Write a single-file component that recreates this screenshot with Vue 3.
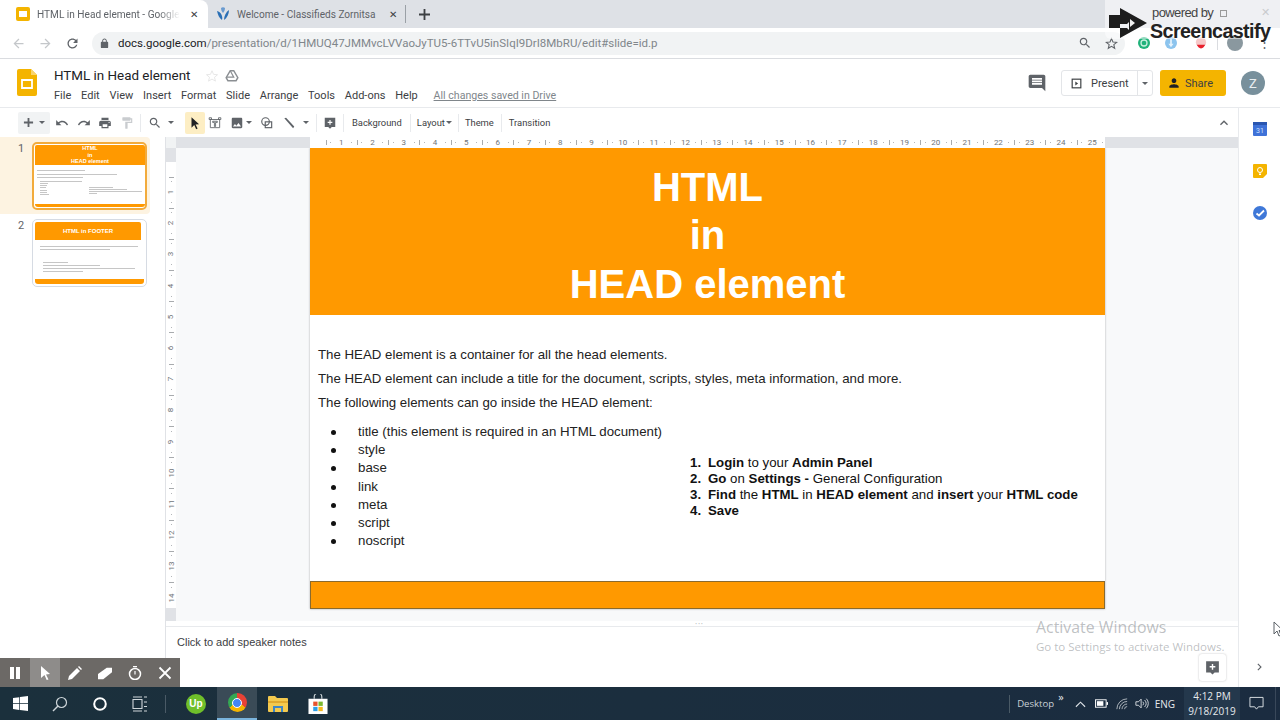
<template>
  <div class="app">
    <!-- browser tabs -->
    <div class="tabs">
      <div class="tab active">
        <svg class="fav" viewBox="0 0 14 14"><rect width="14" height="14" rx="2" fill="#f4b400"/><rect x="3" y="4" width="8" height="6" fill="#fff"/></svg>
        <span class="tab-title fade">HTML in Head element - Google</span>
        <span class="tab-x">✕</span>
      </div>
      <div class="tab second">
        <svg class="fav" viewBox="0 0 14 14"><path d="M1 4c1 4 2 7 5 9 1-4-1-8-5-9z" fill="#2a6fb5"/><path d="M8 13c3-2 5-6 5-10-3 2-5 6-5 10z" fill="#2a6fb5"/><path d="M5 1c0 2 1 4 2 5 1-1 2-3 2-5-1-1-3-1-4 0z" fill="#6a9bd0"/></svg>
        <span class="tab-title">Welcome - Classifieds Zornitsa</span>
        <span class="tab-x">✕</span>
      </div>
      <span class="tab-sep"></span>
      <svg class="tab-plus" viewBox="0 0 12 12"><path d="M5 0h2v5h5v2H7v5H5V7H0V5h5z" fill="#3c4043"/></svg>
    </div>

    <!-- address bar -->
    <div class="addr">
      <svg class="nav first" viewBox="0 0 24 24"><path :d="ic.back" fill="#c4c7ca"/></svg>
      <svg class="nav" viewBox="0 0 24 24"><path :d="ic.fwd" fill="#c4c7ca"/></svg>
      <svg class="nav" viewBox="0 0 24 24"><path :d="ic.reload" fill="#5f6368"/></svg>
      <div class="omni">
        <svg class="lock" viewBox="0 0 24 24"><path :d="ic.lock" fill="#5f6368"/></svg>
        <span class="url"><b>docs.google.com</b>/presentation/d/1HMUQ47JMMvcLVVaoJyTU5-6TTvU5inSIqI9DrI8MbRU/edit#slide=id.p</span>
        <svg class="omni-zoom" viewBox="0 0 24 24"><path :d="ic.search" fill="#5f6368"/></svg>
        <svg class="omni-star" viewBox="0 0 24 24"><path d="M12 3l2.7 6.2 6.8.6-5.2 4.4 1.6 6.6L12 17.3l-5.9 3.5 1.6-6.6-5.2-4.4 6.8-.6z" fill="none" stroke="#5f6368" stroke-width="2"/></svg>
      </div>
      <div class="exts">
        <svg class="ext" viewBox="0 0 14 14"><circle cx="7" cy="7" r="7" fill="#20b27a"/><circle cx="7" cy="7" r="3.5" fill="none" stroke="#c8f0df" stroke-width="1.5"/></svg>
        <svg class="ext" viewBox="0 0 14 14"><circle cx="7" cy="7" r="7" fill="#8cc4ee"/><path d="M6 2h2v6h2l-3 4-3-4h2z" fill="#e6f3fc"/></svg>
        <svg class="ext three" viewBox="0 0 14 14"><circle cx="7" cy="6" r="6" fill="#f6c9c9"/><path d="M2 9h10l-2 3a4 4 0 0 1-6 0z" fill="#e8202c"/></svg>
        <span class="ext-sep"></span>
        <span class="ext-avatar"></span>
        <span class="ext-dots">⋮</span>
      </div>
    </div>

    <!-- docs header -->
    <div class="dochead">
      <svg class="logo" viewBox="0 0 20 27"><path d="M2 0h12l6 6v19a2 2 0 0 1-2 2H2a2 2 0 0 1-2-2V2a2 2 0 0 1 2-2z" fill="#f4b400"/><path d="M14 0l6 6h-6z" fill="#f9d46c"/><path d="M5 11h10v8H5z" fill="none" stroke="#fff" stroke-width="1.8"/></svg>
      <div class="docinfo">
        <div class="doctitle">
          <span class="docname">HTML in Head element</span>
          <svg class="star" viewBox="0 0 24 24"><path d="M12 3l2.7 6.2 6.8.6-5.2 4.4 1.6 6.6L12 17.3l-5.9 3.5 1.6-6.6-5.2-4.4 6.8-.6z" fill="none" stroke="#e3e3e3" stroke-width="1.5"/></svg>
          <svg class="drive" viewBox="0 0 24 24"><path d="M9 3h6l7 12-3 5H5l-3-5z" fill="none" stroke="#8b8f93" stroke-width="2.5"/><path d="M9 3l6 11H3" fill="none" stroke="#8b8f93" stroke-width="2"/></svg>
        </div>
        <div class="menus">
          <span v-for="m in menus" :key="m">{{ m }}</span>
          <a class="saved">All changes saved in Drive</a>
        </div>
      </div>
      <svg class="comments" viewBox="0 0 24 24"><path :d="ic.comment" fill="#5f6368"/></svg>
      <div class="present">
        <svg class="present-ic" viewBox="0 0 14 14"><rect x="1.5" y="1.5" width="11" height="11" fill="none" stroke="#3c4043" stroke-width="1.5"/><path d="M5.500 4.500l3.500 2.500-3.500 2.500z" fill="#3c4043"/></svg>
        <span class="present-txt">Present</span>
        <span class="present-caret"><i class="caret"></i></span>
      </div>
      <div class="share">
        <svg viewBox="0 0 24 24"><path :d="ic.person" fill="#202124"/></svg>
        <span>Share</span>
      </div>
      <div class="avatar">Z</div>
    </div>

    <div class="work">
      <div class="center">
        <!-- slides toolbar -->
        <div class="toolbar">
          <div class="tb-new">
            <svg class="tb-plus" viewBox="0 0 12 12"><path d="M5 1h2v4h4v2H7v4H5V7H1V5h4z" fill="#5f6368"/></svg>
            <i class="caret"></i>
          </div>
          <svg class="tb-ic" viewBox="0 0 24 24" style="margin-left:5px"><path :d="ic.undo" fill="#5f6368"/></svg>
          <svg class="tb-ic" viewBox="0 0 24 24" style="margin-left:8px"><path :d="ic.redo" fill="#5f6368"/></svg>
          <svg class="tb-ic" viewBox="0 0 24 24" style="margin-left:7px"><path :d="ic.print" fill="#5f6368"/></svg>
          <svg class="tb-ic" viewBox="0 0 24 24" style="margin-left:8px"><path :d="ic.paint" fill="#c9cccf"/></svg>
          <span class="tb-sep" style="margin-left:6px"></span>
          <svg class="tb-ic" viewBox="0 0 24 24" style="margin-left:7px"><path :d="ic.search" fill="#5f6368"/></svg>
          <i class="caret" style="margin-left:6px"></i>
          <div class="tb-select"><svg viewBox="0 0 24 24"><path :d="ic.cursor" fill="#202124"/></svg></div>
          <svg class="tb-ic" viewBox="0 0 24 24" style="margin-left:3px"><path d="M4 6h16v14H4zM2 3h4v3H2zM18 3h4v3h-4zM8 9h8v2h-3v7h-2v-7H8z" fill="none" stroke="#5f6368" stroke-width="1.5"/></svg>
          <svg class="tb-ic" viewBox="0 0 24 24" style="margin-left:8px"><path :d="ic.image" fill="#5f6368"/></svg>
          <i class="caret" style="margin-left:2px"></i>
          <svg class="tb-ic" viewBox="0 0 24 24" style="margin-left:8px"><rect x="3" y="3" width="13" height="13" rx="6.5" fill="none" stroke="#5f6368" stroke-width="2"/><rect x="9" y="10" width="11" height="10" fill="none" stroke="#5f6368" stroke-width="2"/></svg>
          <svg class="tb-ic" viewBox="0 0 24 24" style="margin-left:8px"><path d="M4 4l3-1 14 15-2 3z" fill="#5f6368"/></svg>
          <i class="caret" style="margin-left:7px"></i>
          <span class="tb-sep" style="margin-left:7px"></span>
          <svg class="tb-ic" viewBox="0 0 24 24" style="margin-left:6px"><path d="M3 3h18v16h-6l-3 3-3-3H3zM11 7v3H8v2h3v3h2v-3h3v-2h-3V7z" fill="#5f6368" fill-rule="evenodd"/></svg>
          <span class="tb-sep" style="margin-left:6px"></span>
          <span class="tb-txt" style="margin-left:8px">Background</span>
          <span class="tb-sep" style="margin-left:8px"></span>
          <span class="tb-txt" style="margin-left:6px">Layout</span>
          <i class="caret" style="margin-left:1px"></i>
          <span class="tb-sep" style="margin-left:6px"></span>
          <span class="tb-txt" style="margin-left:6px">Theme</span>
          <span class="tb-sep" style="margin-left:7px"></span>
          <span class="tb-txt" style="margin-left:7px">Transition</span>
          <svg class="tb-up" viewBox="0 0 24 24"><path d="M7.4 15.4L12 10.8l4.6 4.6L18 14l-6-6-6 6z" fill="#5f6368"/></svg>
        </div>

        <div class="panes">
          <!-- filmstrip -->
          <div class="film">
            <div class="film-row current">
              <span class="film-num">1</span>
              <div class="thumb on">
                <div class="thumb-head one">HTML<br>in<br>HEAD element</div>
                <div class="thumb-body">
                  <i v-for="(w, i) in thumbTop" :key="i" :style="{ width: w + 'px' }"></i>
                  <div class="thumb-cols">
                    <div class="thumb-list">
                      <i v-for="(w, i) in thumbList" :key="i" :style="{ width: w + 'px' }"></i>
                    </div>
                    <div class="thumb-steps">
                      <i v-for="(w, i) in thumbSteps" :key="i" :style="{ width: w + 'px' }"></i>
                    </div>
                  </div>
                </div>
                <div class="thumb-foot"></div>
              </div>
            </div>
            <div class="film-row">
              <span class="film-num">2</span>
              <div class="thumb">
                <div class="thumb-head two">HTML in FOOTER</div>
                <div class="thumb-body two">
                  <i v-for="(w, i) in thumbFoot" :key="i" :style="{ width: w + 'px' }"></i>
                  <div class="thumb-gap"></div>
                  <i v-for="(w, i) in thumbFootList" :key="'s' + i" class="inset" :style="{ width: w + 'px' }"></i>
                </div>
                <div class="thumb-foot two"></div>
              </div>
            </div>
          </div>

          <div class="stage">
            <div class="hruler">
              <span class="corner"></span>
              <span class="hgrey"></span>
              <div class="hmarks">
                <div v-for="n in 25" :key="n" class="hcell"><i></i><span>{{ n }}</span><i></i></div>
              </div>
              <span class="hgrey rest"></span>
            </div>
            <div class="canvas-row">
              <div class="vruler">
                <span class="vgrey"></span>
                <div v-for="n in 14" :key="n" class="vcell"><i></i><span>{{ n }}</span><i></i></div>
                <span class="vgrey end"></span>
              </div>
              <div class="canvas">
                <div class="slide">
                  <div class="slide-head">HTML<br>in<br>HEAD element</div>
                  <div class="slide-body">
                    <p>The HEAD element is a container for all the head elements.</p>
                    <p>The HEAD element can include a title for the document, scripts, styles, meta information, and more.</p>
                    <p>The following elements can go inside the HEAD element:</p>
                    <div class="cols">
                      <ul>
                        <li v-for="e in elements" :key="e">{{ e }}</li>
                      </ul>
                      <ol>
                        <li><b>Login</b> to your <b>Admin Panel</b></li>
                        <li><b>Go</b> on <b>Settings -</b> General Configuration</li>
                        <li><b>Find</b> the <b>HTML</b> in <b>HEAD element</b> and <b>insert</b> your <b>HTML code</b></li>
                        <li><b>Save</b></li>
                      </ol>
                    </div>
                  </div>
                  <div class="slide-foot"></div>
                </div>
              </div>
            </div>
            <div class="split"><span>• • •</span></div>
            <div class="notes">
              <span>Click to add speaker notes</span>
              <div class="notes-add">
                <svg viewBox="0 0 24 24"><path d="M3 3h18v16h-6l-3 3-3-3H3zM11 7v3H8v2h3v3h2v-3h3v-2h-3V7z" fill="#5f6368" fill-rule="evenodd"/></svg>
              </div>
            </div>
          </div>
        </div>
      </div>

      <!-- right side panel -->
      <div class="side">
        <svg class="side-ic first" viewBox="0 0 14 14"><rect width="14" height="14" rx="1" fill="#3f72d8"/><rect width="14" height="3" fill="#2a56b0"/><text x="7" y="11" text-anchor="middle" font-size="7" font-family="Roboto, sans-serif" fill="#cfe0ff">31</text></svg>
        <svg class="side-ic" viewBox="0 0 14 14"><path d="M1 0h12a1 1 0 0 1 1 1v9l-4 4H1a1 1 0 0 1-1-1V1a1 1 0 0 1 1-1z" fill="#f4b400"/><circle cx="7" cy="6" r="2.5" fill="none" stroke="#fff" stroke-width="1"/><path d="M6 9.5h2V11H6z" fill="#fff"/></svg>
        <svg class="side-ic" viewBox="0 0 14 14"><circle cx="7" cy="7" r="7" fill="#3f78d8"/><path d="M3.5 7.5l2.5 2 5-5" fill="none" stroke="#fff" stroke-width="1.8"/></svg>
        <svg class="side-next" viewBox="0 0 24 24"><path d="M9 6l6 6-6 6-1.4-1.400 4.600-4.600-4.600-4.600z" fill="#5f6368"/></svg>
      </div>
    </div>

    <!-- windows taskbar -->
    <div class="taskbar">
      <div class="tk-cell">
        <svg width="15" height="15" viewBox="0 0 15 15"><path d="M0 2.1l6.3-.9v6H0zM7 1.1L15 0v7.2H7zM0 8h6.3v6L0 13.100zM7 8h8v7l-8-1.100z" fill="#fff"/></svg>
      </div>
      <div class="tk-cell">
        <svg width="16" height="16" viewBox="0 0 16 16"><circle cx="9.5" cy="6.5" r="5" fill="none" stroke="#cfd6da" stroke-width="1.2"/><path d="M6 10l-5 5" stroke="#cfd6da" stroke-width="1.4"/></svg>
      </div>
      <div class="tk-cell">
        <svg width="16" height="16" viewBox="0 0 16 16"><circle cx="8" cy="8" r="5.8" fill="none" stroke="#fff" stroke-width="2"/></svg>
      </div>
      <div class="tk-cell">
        <svg width="16" height="16" viewBox="0 0 16 16"><path d="M1 3.500h9v9H1zM1 1h9M1 15h9M12 1h3M12 6h3M12 10.500h3M12 15h3" fill="none" stroke="#cfd6da" stroke-width="1.1"/></svg>
      </div>
      <span class="tk-sep"></span>
      <div class="tk-cell">
        <span class="upwork">Up</span>
      </div>
      <div class="tk-cell chrome-on">
        <span class="chrome"><i></i></span>
      </div>
      <div class="tk-cell">
        <svg width="20" height="17" viewBox="0 0 20 17"><path d="M0 2a1 1 0 0 1 1-1h6l2 2h10a1 1 0 0 1 1 1v12a1 1 0 0 1-1 1H1a1 1 0 0 1-1-1z" fill="#f3c94e"/><path d="M0 6h20v2H0z" fill="#e0a92e"/><path d="M5 11h10v6h-2v-4H7v4H5z" fill="#3d86c6"/></svg>
      </div>
      <div class="tk-cell">
        <svg width="20" height="20" viewBox="0 0 20 21"><path d="M6 5V3a4 4 0 0 1 8 0v2" fill="none" stroke="#cfd6da" stroke-width="1.2"/><rect y="5" width="20" height="16" fill="#fff"/><rect x="5" y="8" width="4.5" height="4.5" fill="#e8532d"/><rect x="10.5" y="8" width="4.5" height="4.5" fill="#7cb82f"/><rect x="5" y="13.5" width="4.5" height="4.5" fill="#2c9ee8"/><rect x="10.5" y="13.5" width="4.5" height="4.5" fill="#f6b81c"/></svg>
      </div>
      <div class="tray">
        <span class="tray-sep"></span>
        <span class="tray-desk">Desktop</span>
        <span class="tray-more">»</span>
        <svg class="tray-up" viewBox="0 0 12 8"><path d="M1 7l5-5 5 5" fill="none" stroke="#dfe4e8" stroke-width="1.2"/></svg>
        <svg class="tray-bat" viewBox="0 0 14 9"><rect x=".5" y=".5" width="11.5" height="8" fill="none" stroke="#fff"/><rect x="2" y="2" width="7" height="5" fill="#fff"/><rect x="12.5" y="3" width="1.5" height="3" fill="#fff"/></svg>
        <svg class="tray-wifi" viewBox="0 0 14 14"><path d="M1 13a12 12 0 0 1 12-12M4 13a9 9 0 0 1 9-9M7 13a6 6 0 0 1 6-6M10 13a3 3 0 0 1 3-3" fill="none" stroke="#bfc6cc" stroke-width="1"/></svg>
        <svg class="tray-snd" viewBox="0 0 16 14"><path d="M1 5h3l3-3v10L4 9H1zM9 5a3 3 0 0 1 0 4M11 3a6 6 0 0 1 0 8M13 1.5a8 8 0 0 1 0 11" fill="none" stroke="#dfe4e8" stroke-width="1"/></svg>
        <span class="tray-lang">ENG</span>
        <div class="clock"><span>4:12 PM</span><span>9/18/2019</span></div>
        <svg class="tray-note" viewBox="0 0 16 15"><path d="M1 1h14v10h-5l-2 2.500L6 11H1z" fill="none" stroke="#dfe4e8" stroke-width="1"/></svg>
        <span class="tray-end"></span>
      </div>
    </div>

    <!-- things that float over the page -->
    <div class="rec-bar">
      <span class="rec"><svg viewBox="0 0 14 14"><path d="M2 1h4v12H2zM8 1h4v12H8z" fill="#fff"/></svg></span>
      <span class="rec on"><svg viewBox="0 0 14 14"><path d="M3 0l9 8-4 .4 2.5 5-1.800.6L6.500 9 3 12z" fill="#fff"/></svg></span>
      <span class="rec"><svg viewBox="0 0 14 14"><path d="M0 14l1-4 8-8 3 3-8 8zM10 1l1-1 3 3-1 1z" fill="#fff"/></svg></span>
      <span class="rec"><svg viewBox="0 0 16 14"><path d="M0 8l10-7h6v5L6 14H0z" fill="#fff"/></svg></span>
      <span class="rec"><svg viewBox="0 0 14 14"><circle cx="7" cy="8" r="5.5" fill="none" stroke="#fff" stroke-width="1.5"/><path d="M5 0h4v1.300H5zM6.400 5h1.200v3.500H6.400z" fill="#fff"/></svg></span>
      <span class="rec"><svg viewBox="0 0 14 14"><path d="M1.500 1.500l11 11M12.500 1.500l-11 11" stroke="#fff" stroke-width="1.8"/></svg></span>
    </div>

    <div class="cast">
      <svg class="cast-logo" viewBox="0 0 38 30"><rect y="7" width="11" height="13" fill="#1d1d1d"/><path d="M11 0l27 15-27 15v-10h7l2 2v-8l-2 2h-7z" fill="#1d1d1d"/><path d="M21 11l5 4-5 4z" fill="#f2f2f2"/></svg>
      <div class="cast-text">
        <span class="cast-by">powered by <i class="cast-box"></i></span>
        <span class="cast-name">Screencastify</span>
      </div>
      <span class="cast-x">✕</span>
    </div>

    <div class="activate">
      <span class="act-big">Activate Windows</span>
      <span class="act-small">Go to Settings to activate Windows.</span>
    </div>

    <svg class="mouse" viewBox="0 0 10 16"><path d="M1 1v12l3-3 2 5 2-1-2-4.5h4z" fill="#fff" stroke="#5a6066" stroke-width="1"/></svg>
  </div>
</template>

<script setup>
const ic = {
  back: "M20 11H7.83l5.59-5.59L12 4l-8 8 8 8 1.41-1.41L7.83 13H20v-2z",
  fwd: "M12 4l-1.41 1.41L16.17 11H4v2h12.17l-5.58 5.59L12 20l8-8z",
  reload: "M17.65 6.35C16.2 4.9 14.21 4 12 4c-4.42 0-7.99 3.58-7.99 8s3.57 8 7.99 8c3.73 0 6.84-2.55 7.73-6h-2.08c-.82 2.33-3.04 4-5.65 4-3.31 0-6-2.69-6-6s2.69-6 6-6c1.66 0 3.14.69 4.22 1.78L13 11h7V4l-2.35 2.35z",
  lock: "M18 8h-1V6c0-2.76-2.24-5-5-5S7 3.24 7 6v2H6c-1.1 0-2 .9-2 2v10c0 1.1.9 2 2 2h12c1.1 0 2-.9 2-2V10c0-1.1-.9-2-2-2zM9 6c0-1.66 1.34-3 3-3s3 1.34 3 3v2H9V6z",
  search: "M15.5 14h-.79l-.28-.27C15.41 12.59 16 11.11 16 9.5 16 5.91 13.09 3 9.5 3S3 5.91 3 9.5 5.91 16 9.5 16c1.61 0 3.09-.59 4.23-1.57l.27.28v.79l5 4.99L20.49 19l-4.99-5zm-6 0C7.01 14 5 11.99 5 9.5S7.01 5 9.5 5 14 7.01 14 9.5 11.99 14 9.5 14z",
  comment: "M21.99 4c0-1.1-.89-2-1.99-2H4c-1.1 0-2 .9-2 2v12c0 1.1.9 2 2 2h14l4 4-.01-18zM18 14H6v-2h12v2zm0-3H6V9h12v2zm0-3H6V6h12v2z",
  person: "M12 12c2.21 0 4-1.79 4-4s-1.79-4-4-4-4 1.79-4 4 1.79 4 4 4zm0 2c-2.67 0-8 1.34-8 4v2h16v-2c0-2.66-5.33-4-8-4z",
  undo: "M12.5 8c-2.65 0-5.05.99-6.9 2.6L2 7v9h9l-3.62-3.62c1.39-1.16 3.16-1.88 5.12-1.88 3.54 0 6.55 2.31 7.6 5.5l2.37-.78C21.08 11.03 17.15 8 12.5 8z",
  redo: "M18.4 10.6C16.55 8.99 14.15 8 11.5 8c-4.65 0-8.58 3.03-9.96 7.22L3.9 16c1.05-3.19 4.05-5.5 7.6-5.5 1.95 0 3.73.72 5.12 1.88L13 16h9V7l-3.6 3.6z",
  print: "M19 8H5c-1.66 0-3 1.34-3 3v6h4v4h12v-4h4v-6c0-1.66-1.34-3-3-3zm-3 11H8v-5h8v5zm3-7c-.55 0-1-.45-1-1s.45-1 1-1 1 .45 1 1-.45 1-1 1zm-1-9H6v4h12V3z",
  paint: "M18 4V3c0-.55-.45-1-1-1H5c-.55 0-1 .45-1 1v4c0 .55.45 1 1 1h12c.55 0 1-.45 1-1V6h1v4H9v11c0 .55.45 1 1 1h2c.55 0 1-.45 1-1v-9h8V4h-3z",
  cursor: "M6 2l13 12-6 .5 3.5 7-2.5 1.2-3.3-7.2L6 20z",
  image: "M21 19V5c0-1.1-.9-2-2-2H5c-1.1 0-2 .9-2 2v14c0 1.1.9 2 2 2h14c1.1 0 2-.9 2-2zM8.5 13.5l2.5 3.01L14.5 12l4.5 6H5l3.5-4.5z",
}

const menus = ["File", "Edit", "View", "Insert", "Format", "Slide", "Arrange", "Tools", "Add-ons", "Help"]
const elements = ["title (this element is required in an HTML document)", "style", "base", "link", "meta", "script", "noscript"]
const thumbTop = [48, 80, 46]
const thumbList = [42, 8, 7, 6, 7, 7, 9]
const thumbSteps = [24, 38, 53, 8]
const thumbFoot = [98, 70]
const thumbFootList = [25, 57, 92, 40]
</script>

<style>
html,
body {
  margin: 0;
  background: #fff;
}
</style>

<style scoped>
.app {
  position: relative;
  width: 1280px;
  height: 720px;
  overflow: hidden;
  display: flex;
  flex-direction: column;
  font-family: Roboto, "Liberation Sans", sans-serif;
  color: #3c4043;
  background: #fff;
}

/* tabs */
.tabs {
  height: 28px;
  flex: none;
  display: flex;
  align-items: center;
  background: #dee1e6;
}
.tab {
  height: 28px;
  display: flex;
  align-items: center;
  font-size: 10.1px;
  color: #5f6368;
}
.tab.active {
  width: 208px;
  padding-left: 16px;
  box-sizing: border-box;
  background: #fff;
  border-radius: 0 8px 0 0;
}
.tab.second {
  width: 197px;
  padding-left: 8px;
  box-sizing: border-box;
}
.fav {
  width: 14px;
  height: 14px;
  flex: none;
}
.tab-title {
  margin-left: 7px;
  white-space: nowrap;
  flex: none;
}
.tab-title.fade {
  -webkit-mask-image: linear-gradient(to right, #000 85%, transparent);
  mask-image: linear-gradient(to right, #000 85%, transparent);
}
.tab-x {
  margin-left: auto;
  margin-right: 10px;
  font-size: 10px;
  color: #3c4043;
}
.tab.second .tab-x {
  margin-right: 8px;
}
.tab-sep {
  width: 1px;
  height: 18px;
  background: #9aa0a6;
}
.tab-plus {
  width: 11px;
  height: 11px;
  margin-left: 13px;
}

/* address */
.addr {
  height: 30px;
  flex: none;
  display: flex;
  align-items: center;
  border-bottom: 1px solid #dadce0;
}
.nav {
  width: 15px;
  height: 15px;
  margin-left: 12px;
}
.nav.first {
  margin-left: 11px;
}
.omni {
  margin-left: 12px;
  width: 1033px;
  height: 23px;
  border-radius: 12px;
  background: #f1f3f4;
  display: flex;
  align-items: center;
  padding-left: 7px;
  box-sizing: border-box;
  flex: none;
}
.lock {
  width: 11px;
  height: 11px;
}
.url {
  margin-left: 8px;
  font-size: 11.5px;
  color: #80868b;
  white-space: nowrap;
}
.url b {
  font-weight: 400;
  color: #202124;
}
.omni-zoom {
  margin-left: auto;
  width: 14px;
  height: 14px;
  margin-right: 13px;
}
.omni-star {
  width: 13px;
  height: 13px;
  margin-right: 7px;
}
.exts {
  display: flex;
  align-items: center;
  margin-left: 13px;
}
.ext {
  width: 12px;
  height: 12px;
  margin-right: 15px;
}
.ext.three {
  margin-right: 10px;
  margin-left: 3px;
}
.ext-sep {
  width: 1px;
  height: 14px;
  background: #dadce0;
  margin-right: 9px;
}
.ext-avatar {
  width: 16px;
  height: 16px;
  border-radius: 50%;
  background: #8a989f;
  margin-right: 15px;
}
.ext-dots {
  font-size: 13px;
  line-height: 6px;
  color: #5f6368;
}

/* doc header */
.dochead {
  height: 48px;
  flex: none;
  display: flex;
  align-items: center;
  border-bottom: 1px solid #e8eaed;
}
.logo {
  width: 20px;
  height: 27px;
  margin-left: 17px;
  margin-bottom: 1px;
}
.docinfo {
  margin-left: 17px;
  display: flex;
  flex-direction: column;
  gap: 5px;
  padding-top: 3px;
}
.doctitle {
  display: flex;
  align-items: center;
  height: 17px;
}
.docname {
  font-size: 13.4px;
  color: #202124;
}
.star {
  width: 14px;
  height: 14px;
  margin-left: 15px;
}
.drive {
  width: 14px;
  height: 14px;
  margin-left: 6px;
}
.menus {
  display: flex;
  gap: 9.8px;
  font-size: 11px;
  height: 13px;
  line-height: 13px;
  color: #3c4043;
}
.saved {
  margin-left: 6px;
  font-size: 10.6px;
  color: #80868b;
  text-decoration: underline;
}
.comments {
  width: 20px;
  height: 20px;
  margin-left: auto;
}
.present {
  margin-left: 14px;
  width: 92px;
  height: 26px;
  box-sizing: border-box;
  border: 1px solid #e3e5e8;
  border-radius: 3px;
  display: flex;
  align-items: center;
  font-size: 11px;
  color: #3c4043;
}
.present-ic {
  width: 11px;
  height: 11px;
  margin-left: 9px;
}
.present-txt {
  margin-left: 9px;
}
.present-caret {
  margin-left: auto;
  width: 14px;
  height: 100%;
  border-left: 1px solid #e3e5e8;
  display: flex;
  align-items: center;
  justify-content: center;
}
.caret {
  display: inline-block;
  width: 0;
  height: 0;
  flex: none;
  border-left: 3px solid transparent;
  border-right: 3px solid transparent;
  border-top: 3px solid #5f6368;
}
.share {
  margin-left: 7px;
  width: 66px;
  height: 26px;
  background: #f4b400;
  border-radius: 3px;
  display: flex;
  align-items: center;
  font-size: 11px;
  color: #3c4043;
}
.share svg {
  width: 14px;
  height: 14px;
  margin-left: 7px;
  margin-right: 4px;
}
.avatar {
  width: 24px;
  height: 24px;
  margin-left: 15px;
  margin-right: 15px;
  border-radius: 50%;
  background: #78909c;
  color: #e8eef1;
  font-size: 13px;
  display: flex;
  align-items: center;
  justify-content: center;
}

/* workspace */
.work {
  flex: 1;
  display: flex;
  min-height: 0;
}
.center {
  width: 1238px;
  flex: none;
  display: flex;
  flex-direction: column;
}
.toolbar {
  height: 29px;
  flex: none;
  display: flex;
  align-items: center;
  padding-left: 18px;
  box-sizing: border-box;
}
.tb-new {
  width: 32px;
  height: 22px;
  background: #f1f3f4;
  display: flex;
  align-items: center;
  padding-left: 5px;
  box-sizing: border-box;
  gap: 5px;
  border-radius: 2px;
}
.tb-plus {
  width: 11px;
  height: 11px;
}
.tb-ic {
  width: 14px;
  height: 14px;
  flex: none;
}
.tb-sep {
  width: 1px;
  height: 18px;
  background: #e8eaed;
  flex: none;
}
.tb-select {
  margin-left: 11px;
  width: 20px;
  height: 22px;
  background: #fdeec4;
  display: flex;
  align-items: center;
  justify-content: center;
  border-radius: 2px;
}
.tb-select svg {
  width: 14px;
  height: 14px;
}
.tb-txt {
  font-size: 9.4px;
  color: #3c4043;
  white-space: nowrap;
}
.tb-up {
  width: 16px;
  height: 16px;
  margin-left: auto;
  margin-right: 6px;
}
.panes {
  flex: 1;
  display: flex;
  min-height: 0;
}

/* filmstrip */
.film {
  width: 166px;
  flex: none;
  box-sizing: border-box;
  border-right: 1px solid #e0e2e6;
}
.film-row {
  width: 150px;
  height: 77px;
  box-sizing: border-box;
  display: flex;
  align-items: flex-start;
  padding-top: 5px;
  border-radius: 0 4px 4px 0;
}
.film-row.current {
  background: #fdf3e1;
}
.film-num {
  width: 32px;
  flex: none;
  text-align: center;
  padding-left: 10px;
  box-sizing: border-box;
  font-size: 11px;
  line-height: 14px;
  color: #5f6368;
}
.thumb {
  width: 115px;
  height: 68px;
  box-sizing: border-box;
  border: 1px solid #d6dbe3;
  border-radius: 5px;
  background: #fff;
  padding: 2px;
  display: flex;
  flex-direction: column;
}
.thumb.on {
  border: 2px solid #f2ab3c;
  padding: 1px 0 1px 1px;
}
.thumb-head {
  background: #ff9900;
  color: #fff;
  font-family: "Liberation Sans", sans-serif;
  font-weight: 700;
  font-size: 5.5px;
  line-height: 6.7px;
  text-align: center;
  height: 20px;
  flex: none;
  border-radius: 2px 2px 0 0;
}
.thumb-head.two {
  height: 18px;
  line-height: 18px;
  font-size: 6px;
  margin-right: 3px;
}
.thumb-body {
  flex: 1;
  padding: 5px 1px 0 2px;
  display: flex;
  flex-direction: column;
  gap: 2.5px;
  min-height: 0;
}
.thumb-body i {
  display: block;
  height: 1px;
  background: #c6c6c6;
  flex: none;
}
.thumb-cols {
  display: flex;
}
.thumb-list {
  width: 50px;
  flex: none;
  padding-left: 3px;
  box-sizing: border-box;
  display: flex;
  flex-direction: column;
  gap: 1.3px;
}
.thumb-steps {
  margin-top: 6px;
  padding-left: 2px;
  display: flex;
  flex-direction: column;
  gap: 1.2px;
}
.thumb-body.two {
  padding: 6px 3px 0 5px;
  gap: 2px;
}
.thumb-body i.inset {
  margin-left: 3px;
}
.thumb-gap {
  height: 8px;
  flex: none;
}
.thumb-foot {
  height: 3px;
  flex: none;
  background: #ff9900;
  border-radius: 0 0 3px 3px;
}
.thumb-foot.two {
  height: 5px;
}

/* stage */
.stage {
  flex: 1;
  min-width: 0;
  display: flex;
  flex-direction: column;
}
.hruler {
  height: 11px;
  flex: none;
  display: flex;
  background: #e0e2e6;
}
.corner {
  width: 10px;
  background: #f1f3f4;
  flex: none;
}
.hgrey {
  width: 134px;
  flex: none;
}
.hgrey.rest {
  flex: 1;
}
.hmarks {
  width: 795px;
  flex: none;
  background: #fff;
  display: flex;
  overflow: hidden;
  padding-left: 15.5px;
  box-sizing: border-box;
}
.hcell {
  width: 31.3px;
  flex: none;
  display: flex;
  align-items: center;
  justify-content: center;
  gap: 5px;
  font-size: 8px;
  color: #6f7478;
  box-sizing: border-box;
  background: linear-gradient(#a8abae, #a8abae) 0 center / 1px 5px no-repeat;
}
.hcell i,
.vcell i {
  width: 1px;
  height: 1px;
  background: #b4b7ba;
  flex: none;
}
.hcell span {
  width: 10px;
  text-align: center;
}
.canvas-row {
  flex: 1;
  display: flex;
  min-height: 0;
}
.vruler {
  width: 10px;
  flex: none;
  background: #fff;
  display: flex;
  flex-direction: column;
  overflow: hidden;
}
.vgrey {
  height: 14px;
  flex: none;
  margin-bottom: 14.5px;
  background: #e0e2e6;
}
.vgrey.end {
  height: 13px;
  margin-top: -5px;
  margin-bottom: 0;
}
.vcell {
  height: 31.2px;
  flex: none;
  display: flex;
  flex-direction: column;
  align-items: center;
  justify-content: center;
  gap: 5px;
  font-size: 8px;
  color: #6f7478;
  background: linear-gradient(#a8abae, #a8abae) center 0 / 5px 1px no-repeat;
}
.vcell span {
  transform: rotate(-90deg);
  height: 10px;
  line-height: 10px;
  white-space: nowrap;
}
.canvas {
  flex: 1;
  background: #f8f9fa;
  padding-left: 134px;
  overflow: hidden;
  min-width: 0;
}
.slide {
  width: 795px;
  height: 461px;
  background: #fff;
  box-shadow: 0 0 2px rgba(60, 64, 67, 0.4);
  display: flex;
  flex-direction: column;
  font-family: "Liberation Sans", sans-serif;
  color: #222;
}
.slide-head {
  height: 167px;
  flex: none;
  box-sizing: border-box;
  padding-top: 15px;
  background: #ff9900;
  color: #fff;
  font-weight: 700;
  font-size: 40px;
  line-height: 48.4px;
  text-align: center;
}
.slide-body {
  flex: 1;
  padding: 28px 0 0 8px;
  font-size: 13.28px;
}
.slide-body p {
  margin: 0;
  height: 24px;
  line-height: 24px;
}
.cols {
  display: flex;
  margin-top: 8px;
}
.cols ul {
  margin: 0;
  padding: 0;
  width: 372px;
  list-style: none;
  flex: none;
}
.cols ul li {
  position: relative;
  padding-left: 40px;
  height: 18.2px;
  line-height: 18.2px;
}
.cols ul li::before {
  content: "";
  position: absolute;
  left: 13px;
  top: 7px;
  width: 5px;
  height: 5px;
  border-radius: 50%;
  background: #111;
}
.cols ol {
  margin: 32px 0 0;
  padding: 0 0 0 18px;
  list-style: none;
  counter-reset: step;
  color: #111;
}
.cols ol li {
  position: relative;
  counter-increment: step;
  height: 16px;
  line-height: 16px;
  white-space: nowrap;
}
.cols ol li::before {
  content: counter(step) ".";
  position: absolute;
  left: -18px;
  font-weight: 700;
}
.slide-foot {
  height: 28px;
  flex: none;
  box-sizing: border-box;
  background: #ff9900;
  border: 1px solid #8a6a2e;
}
.split {
  height: 6px;
  flex: none;
  box-sizing: border-box;
  border-bottom: 1px solid #e8eaed;
  background: #fff;
  display: flex;
  justify-content: center;
  align-items: center;
  font-size: 5px;
  color: #b5b8bb;
}
.split span {
  margin-left: -6px;
}
.notes {
  height: 60px;
  flex: none;
  display: flex;
  align-items: flex-start;
  padding: 8px 12px 0 11px;
  box-sizing: border-box;
  font-family: "Liberation Sans", sans-serif;
  font-size: 11px;
  color: #3c4043;
  background: #fff;
}
.notes span {
  line-height: 14px;
}
.notes-add {
  margin-left: auto;
  margin-top: 19px;
  width: 27px;
  height: 27px;
  border-radius: 3px;
  box-shadow: 0 0 2px rgba(60, 64, 67, 0.35);
  display: flex;
  align-items: center;
  justify-content: center;
  background: #fff;
}
.notes-add svg {
  width: 17px;
  height: 17px;
}

/* side panel */
.side {
  width: 42px;
  flex: none;
  box-sizing: border-box;
  border-left: 1px solid #e8eaed;
  display: flex;
  flex-direction: column;
  align-items: center;
}
.side-ic {
  width: 14px;
  height: 14px;
  margin-top: 28px;
}
.side-ic.first {
  margin-top: 14px;
}
.side-next {
  width: 14px;
  height: 14px;
  margin-top: auto;
  margin-bottom: 13px;
}

/* taskbar */
.taskbar {
  height: 33px;
  flex: none;
  display: flex;
  align-items: center;
  background: linear-gradient(to right, #1b303c, #1b2c40);
  color: #e6eaed;
  font-family: "Open Sans", "Liberation Sans", sans-serif;
}
.tk-cell {
  width: 40px;
  height: 33px;
  flex: none;
  display: flex;
  align-items: center;
  justify-content: center;
  box-sizing: border-box;
}
.tk-sep {
  width: 1px;
  height: 18px;
  background: #4a5a66;
  margin-left: 5px;
  margin-right: 10px;
}
.chrome-on {
  background: #3a4b57;
  border-bottom: 2px solid #7ab4dc;
  margin: 0 1px;
}
.upwork {
  width: 20px;
  height: 20px;
  border-radius: 50%;
  background: #6fbf2a;
  color: #fff;
  font-family: "Liberation Sans", sans-serif;
  font-size: 10px;
  font-weight: 700;
  display: flex;
  align-items: center;
  justify-content: center;
}
.chrome {
  width: 19px;
  height: 19px;
  border-radius: 50%;
  background: conic-gradient(#e94235 0 120deg, #f4b400 120deg 240deg, #34a853 240deg 360deg);
  display: flex;
  align-items: center;
  justify-content: center;
}
.chrome i {
  width: 8px;
  height: 8px;
  border-radius: 50%;
  background: #4285f4;
  border: 1px solid #fff;
}
.tray {
  margin-left: auto;
  display: flex;
  align-items: center;
  height: 33px;
}
.tray-sep {
  width: 1px;
  height: 18px;
  background: #4a5a66;
}
.tray-desk {
  margin-left: 7px;
  font-size: 9.6px;
  color: #c9d1d6;
}
.tray-more {
  margin-left: 4px;
  font-size: 11px;
  margin-bottom: 14px;
}
.tray-up {
  width: 11px;
  height: 8px;
  margin-left: 11px;
}
.tray-bat {
  width: 13px;
  height: 9px;
  margin-left: 9px;
}
.tray-wifi {
  width: 12px;
  height: 12px;
  margin-left: 8px;
}
.tray-snd {
  width: 14px;
  height: 13px;
  margin-left: 7px;
}
.tray-lang {
  margin-left: 6px;
  font-size: 10px;
}
.clock {
  margin-left: 9px;
  width: 56px;
  height: 33px;
  background: #24384c;
  display: flex;
  flex-direction: column;
  align-items: center;
  justify-content: center;
  font-size: 10px;
  line-height: 15px;
}
.tray-note {
  width: 15px;
  height: 15px;
  margin-left: 9px;
}
.tray-end {
  width: 1px;
  height: 33px;
  background: #39485a;
  margin-left: 11px;
  margin-right: 4px;
}

/* overlays */
.rec-bar {
  position: absolute;
  left: 0;
  top: 658px;
  height: 29px;
  display: flex;
  background: #6c6966;
}
.rec {
  width: 30px;
  display: flex;
  align-items: center;
  justify-content: center;
}
.rec.on {
  background: #8e8c8a;
}
.rec svg {
  width: 14px;
  height: 14px;
}
.cast {
  position: absolute;
  left: 1105px;
  top: 0;
  width: 175px;
  height: 39px;
  display: flex;
  background: rgba(255, 255, 255, 0.5);
  border-radius: 0 0 0 6px;
}
.cast-logo {
  width: 38px;
  height: 30px;
  margin: 8px 0 0 4px;
  flex: none;
}
.cast-text {
  display: flex;
  flex-direction: column;
  margin-left: 3px;
  color: #2a2a2a;
}
.cast-by {
  font-family: "Liberation Sans", sans-serif;
  font-size: 13px;
  letter-spacing: -0.6px;
  line-height: 14px;
  margin-top: 6px;
  margin-left: 2px;
  white-space: nowrap;
  color: #444;
}
.cast-box {
  display: inline-block;
  width: 7px;
  height: 7px;
  margin-left: 4px;
  box-sizing: border-box;
  border: 1px solid #9a9a9a;
}
.cast-name {
  font-family: "Liberation Sans", sans-serif;
  font-weight: 700;
  font-size: 19.7px;
  letter-spacing: -0.6px;
  line-height: 16px;
  margin-top: 3px;
  white-space: nowrap;
  color: #222;
}
.cast-x {
  position: absolute;
  right: 10px;
  top: 6px;
  font-size: 11px;
  color: #c9cbce;
}
.activate {
  position: absolute;
  left: 1036px;
  top: 617px;
  display: flex;
  flex-direction: column;
  font-family: "Open Sans", "Liberation Sans", sans-serif;
  color: rgba(110, 115, 120, 0.45);
  pointer-events: none;
}
.act-big {
  font-size: 15.9px;
  line-height: 20px;
}
.act-small {
  font-size: 11.5px;
  line-height: 20px;
  white-space: nowrap;
}
.mouse {
  position: absolute;
  left: 1273px;
  top: 621px;
  width: 10px;
  height: 16px;
}
</style>
